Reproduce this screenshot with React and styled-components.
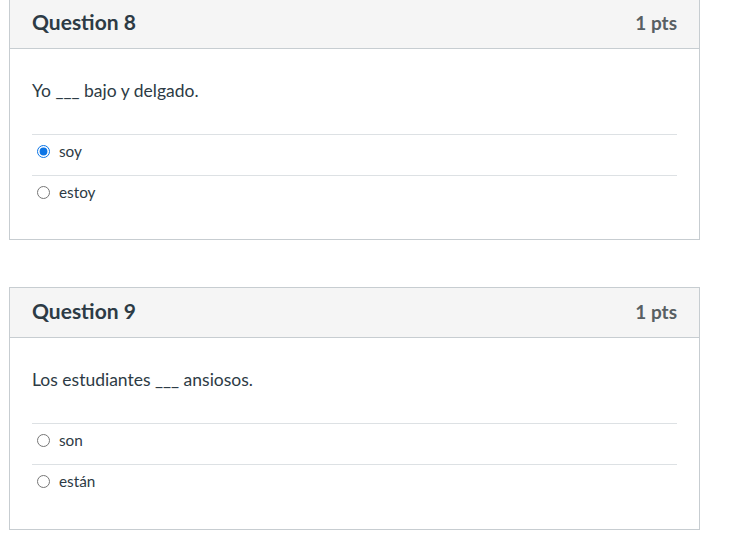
import React from "react";
import styled, { createGlobalStyle } from "styled-components";

const GlobalStyle = createGlobalStyle`
  * {
    box-sizing: border-box;
  }
  body {
    margin: 0;
    background: #fff;
    font-family: Lato, "Open Sans", sans-serif;
    color: #2d3b45;
  }
`;

const Page = styled.div`
  padding: 0 36px 0 9px;
  margin-top: -2px;
  display: flex;
  flex-direction: column;
  gap: 47px;
`;

const Card = styled.div`
  width: 691px;
  border: 1px solid #c7cdd1;
  background: #fff;
`;

const Header = styled.div`
  height: 50px;
  background: #f5f5f5;
  border-bottom: 1px solid #c7cdd1;
  display: flex;
  align-items: center;
  justify-content: space-between;
  padding: 0 22px 5px;
`;

const Title = styled.h2`
  margin: 0;
  font-size: 21px;
  font-weight: 700;
  color: #2d3b45;
`;

const Points = styled.span`
  font-size: 19px;
  font-weight: 700;
  color: #585f63;
  position: relative;
  top: 1px;
`;

const Body = styled.div`
  padding: 31px 22px ${(p) => p.$bottom}px;
`;

const Prompt = styled.p`
  margin: 0 0 32px;
  font-size: 17.5px;
  line-height: 22px;
  color: #2d3b45;
`;

const Answer = styled.label`
  height: 41px;
  display: flex;
  align-items: center;
  gap: 9px;
  border-top: 1px solid #dde1e4;
  font-size: 15.3px;
  color: #2d3b45;
  padding: 0 0 8px 5px;
`;

const Radio = styled.input`
  margin: 0;
  width: 13px;
  height: 13px;
  accent-color: #0b74e5;
`;

const questions = [
  {
    n: 8,
    prompt: "Yo ___ bajo y delgado.",
    answers: ["soy", "estoy"],
    checked: 0,
    bottom: 23,
  },
  {
    n: 9,
    prompt: "Los estudiantes ___ ansiosos.",
    answers: ["son", "están"],
    checked: -1,
    bottom: 24,
  },
];

const App = () => (
  <>
    <GlobalStyle />
    <Page>
      {questions.map((q) => (
        <Card key={q.n}>
          <Header>
            <Title>Question {q.n}</Title>
            <Points>1 pts</Points>
          </Header>
          <Body $bottom={q.bottom}>
            <Prompt>{q.prompt}</Prompt>
            {q.answers.map((a, i) => (
              <Answer key={a}>
                <Radio
                  type="radio"
                  name={`q${q.n}`}
                  defaultChecked={i === q.checked}
                />
                {a}
              </Answer>
            ))}
          </Body>
        </Card>
      ))}
    </Page>
  </>
);

export default App;
